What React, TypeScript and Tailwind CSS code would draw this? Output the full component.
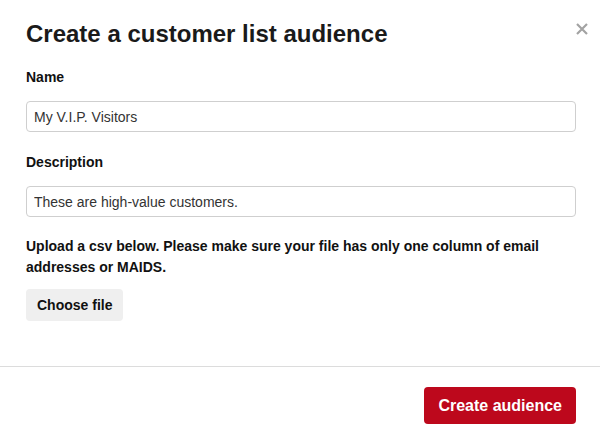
import React from 'react';

const App: React.FC = () => {
  return (
    <div className="w-[600px] h-[442px] bg-white flex flex-col font-['Liberation_Sans',Arial,sans-serif] text-[#111]">
      <div className="flex-1 pl-[26px] pr-[24px] pt-[19px]">
        <div className="flex items-start justify-between">
          <h1 className="text-[24px] font-bold leading-[30px] text-[#1a1a1a]">Create a customer list audience</h1>
          <button className="mt-[4px] -mr-[12px] text-[#a3a3a3]" aria-label="Close">
            <svg width="12" height="12" viewBox="0 0 12 12">
              <path d="M1 1L11 11M11 1L1 11" stroke="currentColor" strokeWidth="2.2" />
            </svg>
          </button>
        </div>

        <label className="block mt-[19px] text-[14px] font-bold leading-[18px]">Name</label>
        <input
          defaultValue="My V.I.P. Visitors"
          className="mt-[15px] w-full h-[31px] px-[7px] border border-[#cfcfcf] rounded-[4px] text-[14px] text-[#333] outline-none"
        />

        <label className="block mt-[21px] text-[14px] font-bold leading-[18px]">Description</label>
        <input
          defaultValue="These are high-value customers."
          className="mt-[15px] w-full h-[31px] px-[7px] border border-[#cfcfcf] rounded-[4px] text-[14px] text-[#333] outline-none"
        />

        <p className="mt-[19px] text-[14px] font-bold leading-[21px]">
          Upload a csv below. Please make sure your file has only one column of email addresses or MAIDS.
        </p>

        <button className="mt-[11px] h-[32px] px-[11px] bg-[#efefef] rounded-[4px] text-[14px] font-bold">
          Choose file
        </button>
      </div>

      <div className="border-t border-[#dcdcdc] h-[76px] flex items-start justify-end px-[24px] pt-[20px]">
        <button className="h-[37px] px-[14px] bg-[#bd081c] rounded-[4px] text-white text-[16px] font-bold">
          Create audience
        </button>
      </div>
    </div>
  );
};

export default App;
